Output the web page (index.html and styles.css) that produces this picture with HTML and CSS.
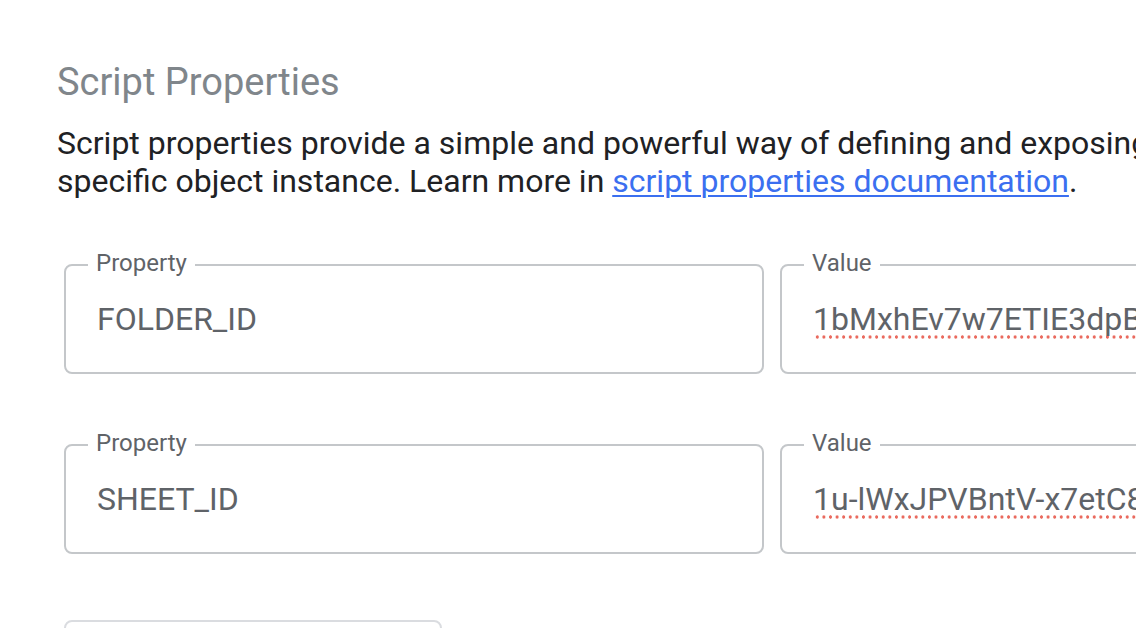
FILE: index.html
```html
<!DOCTYPE html>
<html lang="en">
<head>
<meta charset="utf-8">
<title>Script Properties</title>
<link rel="stylesheet" href="styles.css">
</head>
<body>
<main class="page">
  <h2 class="title">Script Properties</h2>
  <p class="desc">Script properties provide a simple and powerful way of defining and exposing key-value pairs for a<br>specific object instance. Learn more in <a href="#" class="link">script properties documentation</a>.</p>
  <div class="props">
    <div class="row">
      <div class="field field-key">
        <span class="label">Property</span>
        <span class="input">FOLDER_ID</span>
      </div>
      <div class="field field-value">
        <span class="label">Value</span>
        <span class="input"><span class="spell">1bMxhEv7w7ETIE3dpBq9XkLr2sZ0aWfGh</span></span>
      </div>
    </div>
    <div class="row">
      <div class="field field-key">
        <span class="label">Property</span>
        <span class="input">SHEET_ID</span>
      </div>
      <div class="field field-value">
        <span class="label">Value</span>
        <span class="input"><span class="spell">1u-lWxJPVBntV-x7etC8mQdR4yKpZs3vTn</span></span>
      </div>
    </div>
    <div class="row row-add">
      <div class="add-btn"></div>
    </div>
  </div>
</main>
</body>
</html>
```

FILE: styles.css
```css
html, body {
  margin: 0;
  padding: 0;
  background: #ffffff;
  overflow: hidden;
}

body {
  width: 1136px;
  height: 628px;
  font-family: Roboto, "Liberation Sans", sans-serif;
}

.page {
  padding: 57px 0 0 57px;
  width: 1800px;
}

.title {
  margin: 0;
  font-family: Roboto, "Liberation Sans", sans-serif;
  font-weight: 400;
  font-size: 38px;
  line-height: 50px;
  color: #80868b;
}

.desc {
  margin: 17px 0 0 0;
  font-size: 32px;
  line-height: 38px;
  color: #202124;
  white-space: nowrap;
}

.link {
  color: #3b6ff0;
  text-decoration: underline;
  text-decoration-thickness: 2px;
  text-underline-offset: 3px;
}

.props {
  margin: 64px 0 0 7px;
  display: flex;
  flex-direction: column;
  gap: 70px;
}

.row {
  display: flex;
  gap: 16px;
}

.row-add {
  margin-top: -4px;
}

.field {
  position: relative;
  box-sizing: border-box;
  height: 110px;
  border: 2px solid #c4c7ca;
  border-radius: 8px;
  display: flex;
  align-items: center;
  padding-left: 31px;
}

.field-key { width: 700px; }
.field-value { width: 700px; }

.label {
  position: absolute;
  top: -15px;
  left: 22px;
  padding: 0 8px;
  background: #ffffff;
  font-size: 24px;
  line-height: 24px;
  color: #5f6368;
}

.input {
  font-size: 32px;
  line-height: 38px;
  color: #5f6368;
  white-space: nowrap;
}

.spell {
  padding-bottom: 1px;
  background-image: radial-gradient(circle at center, #ea6a5e 1.4px, transparent 1.9px);
  background-size: 6.6px 4px;
  background-repeat: repeat-x;
  background-position: 1px 100%;
}

.add-btn {
  box-sizing: border-box;
  width: 378px;
  height: 60px;
  border: 2px solid #dadce0;
  border-radius: 8px;
}
```
